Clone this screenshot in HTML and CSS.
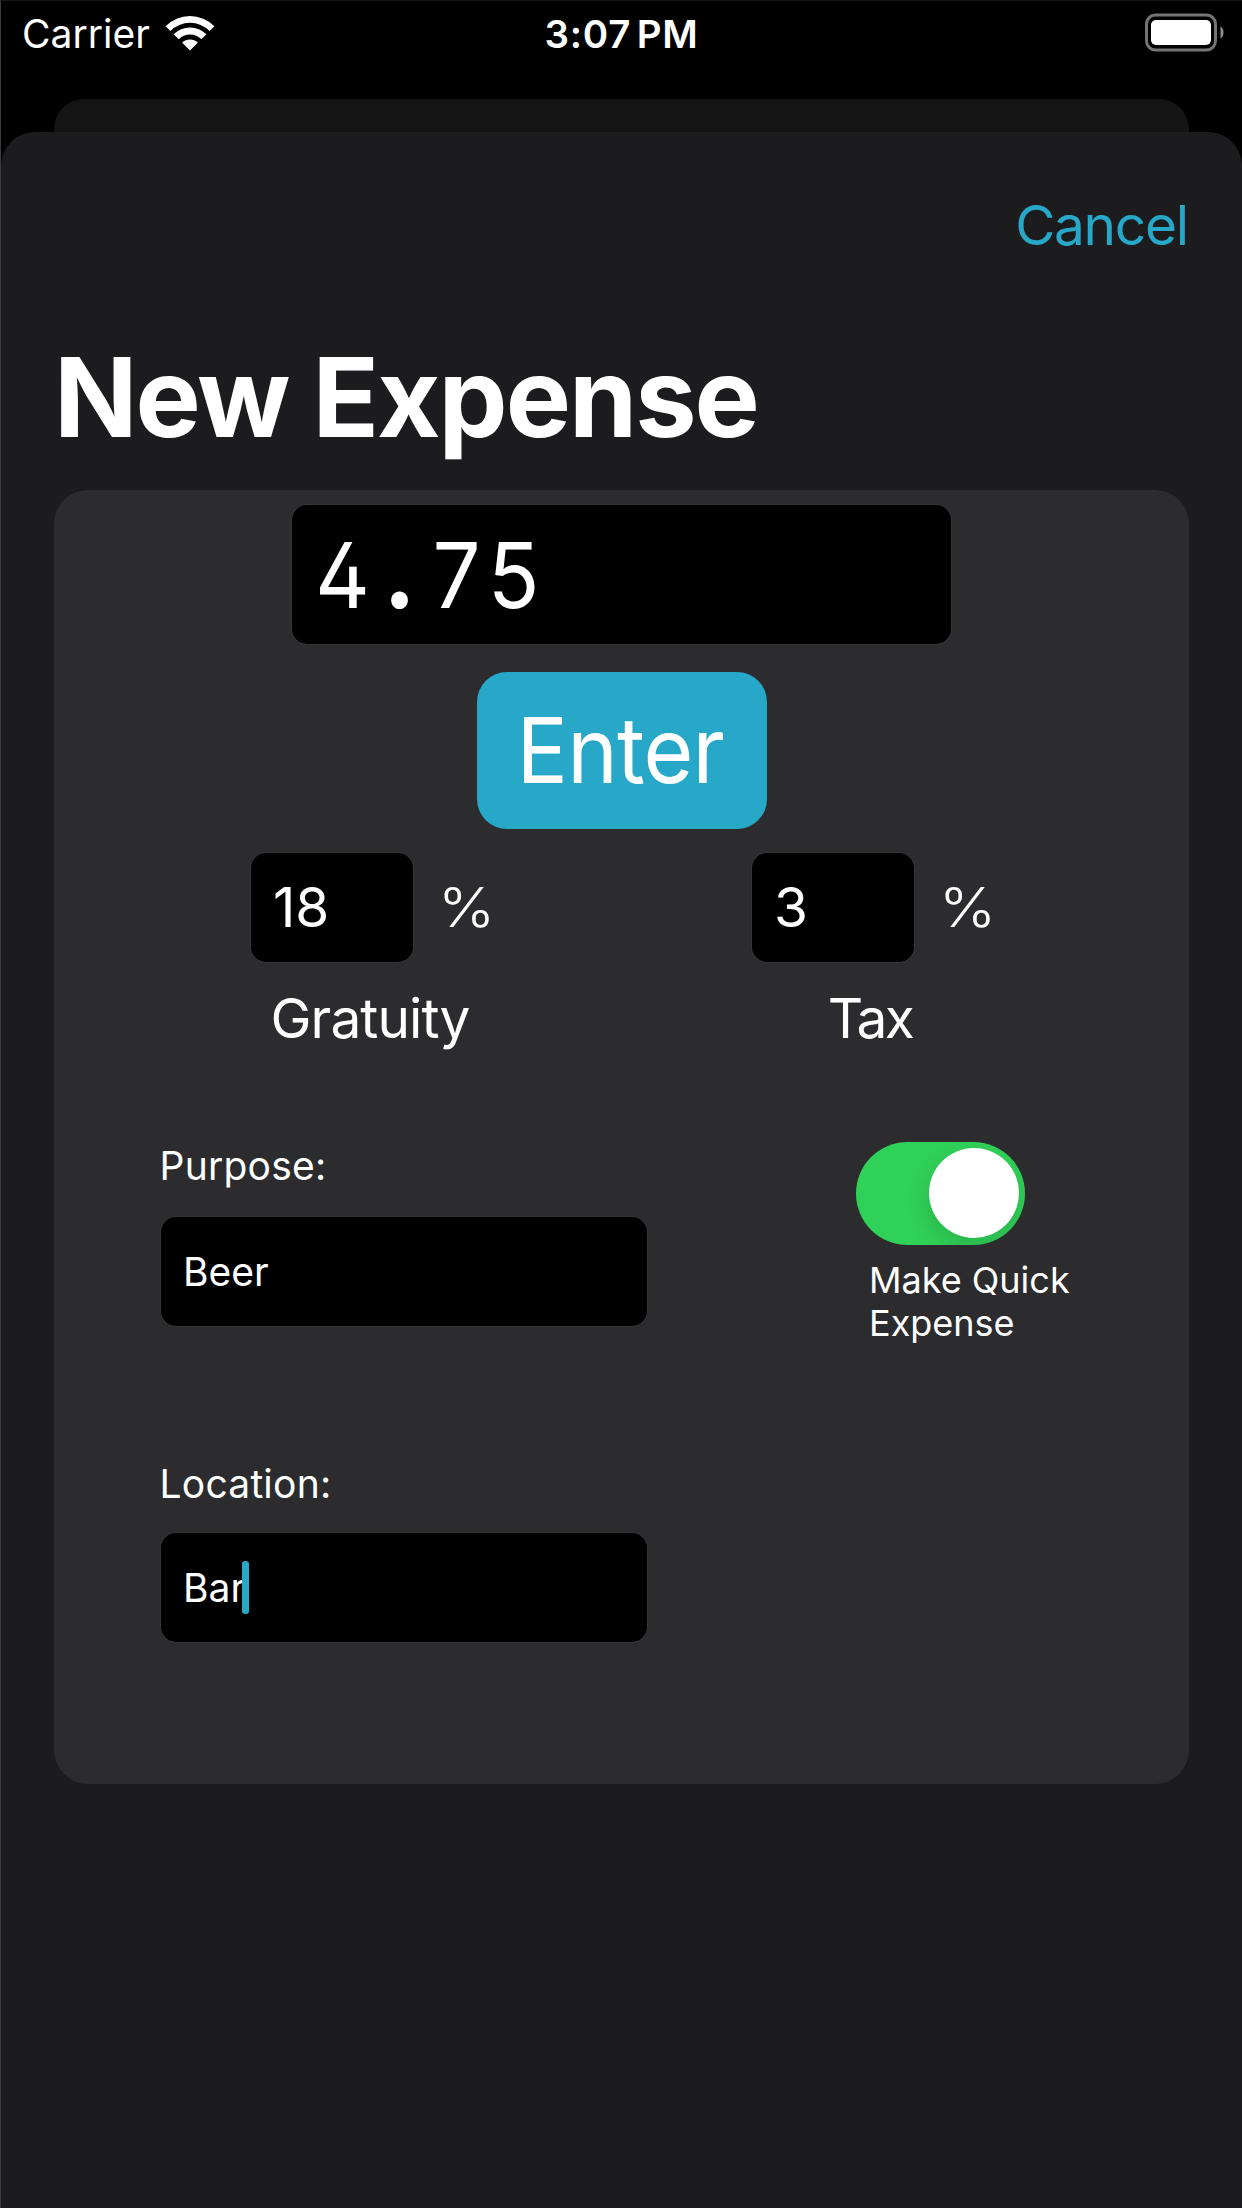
FILE: index.html
```html
<!DOCTYPE html>
<html lang="en">
<head>
<meta charset="utf-8">
<title>New Expense</title>
<link rel="stylesheet" href="styles.css">
</head>
<body>
<div class="screen">
  <header class="status-bar">
    <div class="status-left">
      <span class="carrier">Carrier</span>
      <svg class="wifi" viewBox="0 0 50 38" width="50" height="38" aria-hidden="true">
        <path d="M0.6 12.2 A34.5 34.5 0 0 1 49.4 12.2 L44.6 17 A27.7 27.7 0 0 0 5.4 17 Z"/>
        <path d="M8.6 20.2 A23.2 23.2 0 0 1 41.4 20.2 L36.4 25.2 A16.1 16.1 0 0 0 13.6 25.2 Z"/>
        <path d="M17.2 28.8 A11 11 0 0 1 32.8 28.8 L25 36.6 Z"/>
      </svg>
    </div>
    <span class="clock">3:07 PM</span>
    <svg class="battery" viewBox="0 0 80 40" width="80" height="40" aria-hidden="true">
      <rect class="battery-shell" x="2.500" y="2" width="69" height="35" rx="9"/>
      <rect class="battery-fill" x="7" y="7" width="60" height="25" rx="5"/>
      <path class="battery-cap" d="M76.500 13.500 Q79.500 15 79.500 19.500 Q79.500 24 76.500 25.500 Z"/>
    </svg>
  </header>
  <div class="sheet-behind"></div>
  <main class="sheet">
    <nav class="nav"><a class="cancel">Cancel</a></nav>
    <h1 class="title">New Expense</h1>
    <section class="card">
      <div class="field amount"><span class="amount-text">4<span class="point">.</span>75</span></div>
      <button class="enter"><span class="enter-text">Enter</span></button>
      <div class="rates">
        <div class="rate">
          <div class="rate-row"><div class="field percent">18</div><span class="unit">%</span></div>
          <span class="rate-label gratuity">Gratuity</span>
        </div>
        <div class="rate">
          <div class="rate-row"><div class="field percent">3</div><span class="unit">%</span></div>
          <span class="rate-label tax">Tax</span>
        </div>
      </div>
      <div class="details">
        <div class="entries">
          <div class="entry purpose"><span class="label">Purpose:</span><div class="field text-field">Beer</div></div>
          <div class="entry location"><span class="label">Location:</span><div class="field text-field"><span>Bar</span><i class="caret"></i></div></div>
        </div>
        <div class="quick">
          <div class="switch"><div class="knob"></div></div>
          <p class="quick-label">Make Quick<br>Expense</p>
        </div>
      </div>
    </section>
  </main>
</div>
</body>
</html>
```
FILE: styles.css
```css
* { box-sizing: border-box; }

body {
  margin: 0;
  background: #000;
  color: #fff;
  font-family: Inter, "Liberation Sans", sans-serif;
}

.screen {
  display: flex;
  flex-direction: column;
  width: 1242px;
  height: 2208px;
  overflow: hidden;
  border-left: 1px solid #3c3c3d;
  border-top: 1px solid #141414;
}

.status-bar {
  display: grid;
  grid-template-columns: 1fr auto 1fr;
  flex: none;
  height: 98px;
  padding: 12px 18px 0 21px;
}

.status-left { display: flex; gap: 15px; height: 46px; }
.carrier, .clock { font-size: 39px; line-height: 42px; }
.wifi { margin-top: 1px; fill: #fff; }
.clock { font-weight: 600; font-size: 38.5px; letter-spacing: 0.8px; word-spacing: -5px; margin-right: 3px; }
.battery { justify-self: end; }
.battery-shell { fill: none; stroke: #747474; stroke-width: 3; }
.battery-fill { fill: #fff; }
.battery-cap { fill: #8a8a8a; }

.sheet-behind {
  flex: none;
  height: 33px;
  margin: 0 53px;
  border-radius: 30px 30px 0 0;
  background: #141414;
}

.sheet {
  flex: 1;
  padding: 0 53px;
  border-radius: 34px 34px 0 0;
  background: #1c1c1e;
}

.nav { display: flex; justify-content: flex-end; padding-top: 60px; }
.cancel { margin-right: 1.3px; color: #27a8c8; font-size: 55px; line-height: 66px; letter-spacing: -1.3px; }

.title { margin: 74px 0 0; font-size: 109.6px; line-height: 130px; font-weight: 700; letter-spacing: -2px; white-space: nowrap; }

.card {
  display: flex;
  flex-direction: column;
  align-items: center;
  height: 1294px;
  margin-top: 28px;
  padding-top: 15px;
  border-radius: 34px;
  background: #2c2c2e;
}

.field {
  display: flex;
  flex: none;
  align-items: center;
  border-radius: 15px;
  background: #000;
  box-shadow: 0 0 0 1px #353536;
}

.amount { width: 659px; height: 139px; padding-left: 23px; font-size: 91px; font-feature-settings: "tnum", "cv02", "ss01"; }
.amount-text { display: inline-block; letter-spacing: 2.8px; transform: scaleX(0.935); transform-origin: left; }
.point { display: inline-block; width: 60px; font-size: 105px; font-weight: 700; line-height: 0; text-align: center; }

.enter {
  flex: none;
  width: 290px;
  height: 157px;
  margin-top: 28px;
  padding: 0 2px 0 0;
  border: 0;
  border-radius: 30px;
  background: #27a8c8;
  color: #fff;
  font: 400 91px/157px Inter, "Liberation Sans", sans-serif;
  letter-spacing: -0.8px;
}
.enter-text { display: inline-block; transform: scaleX(0.94); }

.rates { display: flex; width: 100%; margin-top: 24px; padding-left: 197px; gap: 261px; }
.rate { display: flex; flex-direction: column; align-items: center; width: 240px; font-size: 55px; }
.rate-row { display: flex; align-items: center; width: 240px; gap: 25px; }
.percent { width: 162px; height: 109px; padding: 0 0 1px 22px; }
.unit { padding-bottom: 1px; font-weight: 350; transform: scaleX(1.11); transform-origin: left; }
.rate-label { margin: 23px 2px 0 0; line-height: 66px; }
.gratuity { letter-spacing: -0.93px; }
.tax { margin-right: 4px; letter-spacing: -2.6px; }

.details { display: flex; width: 100%; margin-top: 92px; padding-left: 107px; gap: 209px; }
.entries { display: flex; flex-direction: column; gap: 135px; }
.entry { display: flex; flex-direction: column; font-size: 39px; }
.purpose { gap: 28px; }
.location { gap: 26px; }
.label { margin-left: -1.5px; line-height: 46px; letter-spacing: 0.22px; }
.text-field { width: 486px; height: 109px; padding-left: 22px; }
.caret { width: 7px; height: 53px; margin-left: -3px; border-radius: 3px; background: #27a8c8; }

.switch { display: flex; justify-content: flex-end; width: 169px; height: 103px; margin-top: -1px; padding: 6px; border-radius: 52px; background: #30d158; overflow: hidden; }
.knob { width: 90px; height: 90px; border-radius: 50%; background: #fff; box-shadow: 0 9px 24px rgba(0,0,0,.15); }
.quick-label { margin: 14px 0 0 13px; font-size: 36px; line-height: 43px; }
```
